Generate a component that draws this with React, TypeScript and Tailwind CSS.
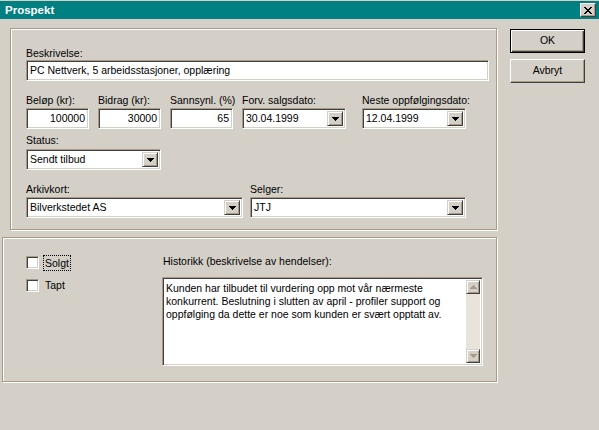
import React from 'react';

const font = { fontFamily: '"Liberation Sans", Arial, sans-serif' };

function Sunken({ className = '', children }: { className?: string; children?: React.ReactNode }) {
  return (
    <div
      className={`border border-t-[#a89a84] border-l-[#a89a84] border-r-white border-b-white shadow-[inset_1px_1px_0_#404040,inset_-1px_-1px_0_#d4d0c8] bg-white ${className}`}
    >
      {children}
    </div>
  );
}

function Arrow({ color = '#000' }: { color?: string }) {
  return (
    <svg width="7" height="4" viewBox="0 0 7 4" shapeRendering="crispEdges">
      <path d="M0 0h7v1H0zM1 1h5v1H1zM2 2h3v1H2zM3 3h1v1H3z" fill={color} />
    </svg>
  );
}

function Field({ value, w, right }: { value: string; w: string; right?: boolean }) {
  return (
    <Sunken className={`${w} h-[21px] flex items-center px-[3px] ${right ? 'justify-end' : ''}`}>
      <span className="leading-[13px] whitespace-nowrap">{value}</span>
    </Sunken>
  );
}

function Combo({ value, w }: { value: string; w: string }) {
  return (
    <Sunken className={`${w} h-[21px] flex items-stretch p-[2px]`}>
      <div className="flex-1 flex items-center pl-[1px] leading-[13px] whitespace-nowrap overflow-hidden">
        {value}
      </div>
      <div className="w-[16px] flex items-center justify-center bg-[#d4d0c8] border border-t-[#d4d0c8] border-l-[#d4d0c8] border-r-[#404040] border-b-[#404040] shadow-[inset_1px_1px_0_#fff,inset_-1px_-1px_0_#a89a84]">
        <Arrow />
      </div>
    </Sunken>
  );
}

function Label({ children }: { children: React.ReactNode }) {
  return <div className="h-[13px] leading-[13px] whitespace-nowrap">{children}</div>;
}

function Checkbox() {
  return (
    <div className="w-[13px] h-[13px] bg-white border border-t-[#a89a84] border-l-[#a89a84] border-r-white border-b-white shadow-[inset_1px_1px_0_#404040,inset_-1px_-1px_0_#d4d0c8]" />
  );
}

function ScrollBtn({ up }: { up?: boolean }) {
  return (
    <div className="h-[14px] flex items-center justify-center bg-[#d4d0c8] border border-t-[#d4d0c8] border-l-[#d4d0c8] border-r-[#404040] border-b-[#404040] shadow-[inset_1px_1px_0_#fff,inset_-1px_-1px_0_#a89a84]">
      <div className={up ? 'rotate-180' : ''}>
        <Arrow color="#a89a84" />
      </div>
    </div>
  );
}

export default function App() {
  return (
    <div className="w-[599px] h-[430px] bg-[#d4d0c8] text-[10.5px] text-black overflow-hidden" style={font}>
      <div className="pt-[1px]">
        <div className="h-[18px] bg-[#008080] flex items-center justify-between pl-[5px] pr-[3px]">
          <span className="text-white font-bold text-[11.5px] leading-[13px]">Prospekt</span>
          <div className="w-[16px] h-[14px] bg-[#d4d0c8] flex items-center justify-center border border-t-[#fff] border-l-[#fff] border-r-[#404040] border-b-[#404040] shadow-[inset_-1px_-1px_0_#a89a84]">
            <svg width="8" height="7" viewBox="0 0 8 7" shapeRendering="crispEdges">
              <path d="M0 0h2v1H0zM6 0h2v1H6zM1 1h2v1H1zM5 1h2v1H5zM2 2h4v1H2zM3 3h2v1H3zM2 4h4v1H2zM1 5h2v1H1zM5 5h2v1H5zM0 6h2v1H0zM6 6h2v1H6z" fill="#000" />
            </svg>
          </div>
        </div>
      </div>

      <div className="flex">
        <div className="w-[497px]">
          {/* Hovedgruppe */}
          <div className="mt-[9px] ml-[10px] w-[487px] h-[202px] border border-[#a89a84] shadow-[inset_1px_1px_0_#fff,1px_1px_0_#fff] pl-[15px] pt-[18px]">
            <Label>Beskrivelse:</Label>
            <Field value="PC Nettverk, 5 arbeidsstasjoner, opplæring" w="w-[463px]" />

            <div className="flex mt-[13px]">
              <div className="w-[72px]">
                <Label>Beløp (kr):</Label>
                <div className="mt-[1px]">
                  <Field value="100000" w="w-[63px]" right />
                </div>
              </div>
              <div className="w-[72px]">
                <Label>Bidrag (kr):</Label>
                <div className="mt-[1px]">
                  <Field value="30000" w="w-[63px]" right />
                </div>
              </div>
              <div className="w-[72px]">
                <Label>Sannsynl. (%)</Label>
                <div className="mt-[1px]">
                  <Field value="65" w="w-[63px]" right />
                </div>
              </div>
              <div className="w-[120px]">
                <Label>Forv. salgsdato:</Label>
                <div className="mt-[1px]">
                  <Combo value="30.04.1999" w="w-[104px]" />
                </div>
              </div>
              <div>
                <Label>Neste oppfølgingsdato:</Label>
                <div className="mt-[1px]">
                  <Combo value="12.04.1999" w="w-[104px]" />
                </div>
              </div>
            </div>

            <div className="mt-[5px]">
              <Label>Status:</Label>
              <div className="mt-[2px]">
                <Combo value="Sendt tilbud" w="w-[135px]" />
              </div>
            </div>

            <div className="flex mt-[13px]">
              <div className="w-[224px]">
                <Label>Arkivkort:</Label>
                <div className="mt-[1px]">
                  <Combo value="Bilverkstedet AS" w="w-[217px]" />
                </div>
              </div>
              <div>
                <Label>Selger:</Label>
                <div className="mt-[1px]">
                  <Combo value="JTJ" w="w-[216px]" />
                </div>
              </div>
            </div>
          </div>

          {/* Historikk */}
          <div className="mt-[7px] ml-[2px] w-[495px] h-[145px] border border-[#a89a84] shadow-[inset_1px_1px_0_#fff,1px_1px_0_#fff] pl-[23px] flex">
            <div className="w-[136px] pt-[18px]">
              <div className="flex items-center h-[13px]">
                <Checkbox />
                <span className="ml-[4px] px-[1px] border border-dotted border-black leading-[14px]">Solgt</span>
              </div>
              <div className="flex items-center h-[13px] mt-[10px]">
                <Checkbox />
                <span className="ml-[6px] leading-[13px]">Tapt</span>
              </div>
            </div>
            <div className="pt-[17px]">
              <div className="pl-[1px]">
                <Label>Historikk (beskrivelse av hendelser):</Label>
              </div>
              <Sunken className="mt-[9px] w-[321px] h-[89px] flex p-[2px]">
                <div className="flex-1 pl-[1px] pt-[2px] leading-[13px]">
                  Kunden har tilbudet til vurdering opp mot vår nærmeste
                  <br />
                  konkurrent. Beslutning i slutten av april - profiler support og
                  <br />
                  oppfølging da dette er noe som kunden er svært opptatt av.
                </div>
                <div className="w-[14px] bg-[#e8e4dc] flex flex-col justify-between">
                  <ScrollBtn up />
                  <ScrollBtn />
                </div>
              </Sunken>
            </div>
          </div>
        </div>

        <div className="ml-[13px] pt-[10px] w-[75px]">
          <div className="h-[24px] flex items-center justify-center border border-black shadow-[inset_1px_1px_0_#fff,inset_-1px_-1px_0_#404040,inset_-2px_-2px_0_#a89a84]">
            OK
          </div>
          <div className="mt-[6px] h-[24px] flex items-center justify-center border border-t-white border-l-white border-r-[#404040] border-b-[#404040] shadow-[inset_-1px_-1px_0_#a89a84]">
            Avbryt
          </div>
        </div>
      </div>
    </div>
  );
}
